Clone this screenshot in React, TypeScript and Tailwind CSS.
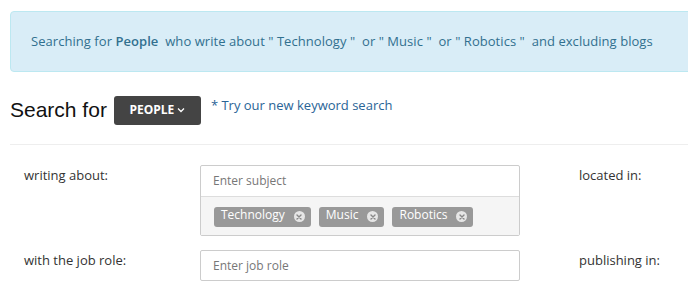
import React from "react";

function Tag({ label }: { label: string }) {
  return (
    <span className="inline-flex items-center h-[20px] pl-[7px] pr-[6px] rounded-[3px] bg-[#999999] text-white text-[12px] leading-none mr-[8px]">
      <span className="-mt-[3px]">{label}</span>
      <span className="ml-[9px] w-[11px] h-[11px] rounded-full bg-[#e6e6e6] flex items-center justify-center">
        <svg width="6" height="6" viewBox="0 0 6 6">
          <path d="M1 1L5 5M5 1L1 5" stroke="#888" strokeWidth="1.4" strokeLinecap="round" />
        </svg>
      </span>
    </span>
  );
}

export default function App() {
  return (
    <div className="w-[688px] h-[298px] overflow-hidden bg-white" style={{ fontFamily: '"Open Sans", sans-serif' }}>
      <div className="pl-[10px] pt-[11px]">
        <div className="h-[61px] w-[700px] border border-[#bce8f1] bg-[#d9edf7] rounded-[4px] flex items-center pl-[20px] text-[13px] text-[#31708f] tracking-[0.05px]">
          <span>
            Searching for <b className="font-semibold">People</b>&nbsp; who write about " Technology "&nbsp; or " Music "&nbsp; or " Robotics "&nbsp; and excluding blogs
          </span>
        </div>
        <div className="flex items-center mt-[23px] h-[30px]">
          <span className="text-[21px] text-[#111]" style={{ fontFamily: '"Liberation Sans", Arial, sans-serif' }}>Search for</span>
          <span className="ml-[7px] h-[29px] w-[87px] rounded-[3px] bg-[#444444] text-white text-[12px] font-bold flex items-center justify-center gap-[3px]">
            PEOPLE
            <svg width="8" height="6" viewBox="0 0 8 6">
              <path d="M1 1.5L4 4.5L7 1.5" stroke="white" strokeWidth="1.3" fill="none" />
            </svg>
          </span>
          <span className="ml-[10px] -mt-[8px] text-[13px] text-[#2a6496]">* Try our new keyword search</span>
        </div>
        <div className="mt-[19px] border-t border-[#eeeeee]" />
        <div className="flex mt-[20px]">
          <div className="w-[190px] pl-[14px] pt-[1px] text-[13px] text-[#333]">writing about:</div>
          <div className="w-[320px] border border-[#cccccc] rounded-[2px]">
            <div className="h-[30px] flex items-center pl-[12px] text-[12px] text-[#777]">Enter subject</div>
            <div className="h-[39px] bg-[#f5f5f5] border-t border-[#ddd] flex items-center pl-[13px] pt-[1px]">
              <Tag label="Technology" />
              <Tag label="Music" />
              <Tag label="Robotics" />
            </div>
          </div>
          <div className="pl-[59px] pt-[1px] text-[13px] text-[#333]">located in:</div>
        </div>
        <div className="flex mt-[14px]">
          <div className="w-[190px] pl-[14px] pt-[1px] text-[13px] text-[#333]">with the job role:</div>
          <div className="w-[320px] h-[31px] border border-[#cccccc] rounded-[2px] flex items-center pl-[12px] text-[12px] text-[#777]">Enter job role</div>
          <div className="pl-[59px] pt-[1px] text-[13px] text-[#333]">publishing in:</div>
        </div>
      </div>
    </div>
  );
}
